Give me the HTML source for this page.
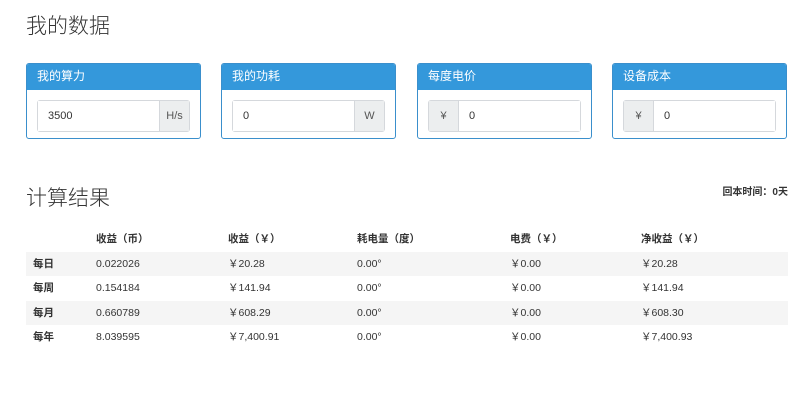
<!DOCTYPE html>
<html><head><meta charset="utf-8"><style>
body{margin:0;width:800px;height:409px;background:#fff;font-family:"Liberation Sans","Noto Sans CJK SC",sans-serif;color:#333;position:relative;overflow:hidden}
.h{position:absolute;left:26px;font-size:21px;font-weight:300;color:#333}
.p{position:absolute;top:63px;width:175px;height:76px;border:1px solid #3a8fcc;border-radius:3px;box-sizing:border-box;overflow:hidden}
.p .t{background:#3498db;color:#fff;font-size:12px;height:26px;line-height:25px;padding-left:10px}
.ig{position:absolute;top:36px;left:10px;right:10px;height:30px;border:1px solid #d5d8dc;border-radius:3px;display:flex;font-size:11px}
.ig .a{background:#eceeef;width:29px;display:flex;align-items:center;justify-content:center;color:#555}
.ig .v{flex:1;background:#fff;padding-left:10px;display:flex;align-items:center}
.ig .a.l{border-right:1px solid #d5d8dc}.ig .a.r{border-left:1px solid #d5d8dc}
table{position:absolute;left:26px;top:227px;width:762px;border-collapse:collapse;font-size:10.5px;table-layout:fixed}
td,th{padding:0;height:24.5px;text-align:left;vertical-align:middle;line-height:14px}
td span{display:inline-block;height:14px;line-height:14px}
td:first-child{padding-left:7px}
th{font-weight:bold;color:#333}
td:first-child{font-weight:bold}
tr.s td{background:#f5f5f5}
</style></head><body>
<div class="h" style="top:10px">我的数据</div>
<div class="p" style="left:26px"><div class="t">我的算力</div><div class="ig"><div class="v">3500</div><div class="a r">H/s</div></div></div>
<div class="p" style="left:221px"><div class="t">我的功耗</div><div class="ig"><div class="v">0</div><div class="a r">W</div></div></div>
<div class="p" style="left:417px"><div class="t">每度电价</div><div class="ig"><div class="a l">¥</div><div class="v">0</div></div></div>
<div class="p" style="left:612px"><div class="t">设备成本</div><div class="ig"><div class="a l">¥</div><div class="v">0</div></div></div>
<div class="h" style="top:182px">计算结果</div>
<div style="position:absolute;right:12px;top:183px;font-size:10px;font-weight:bold">回本时间：0天</div>
<table>
<colgroup><col style="width:70px"><col style="width:132px"><col style="width:129px"><col style="width:153px"><col style="width:131px"><col></colgroup>
<tr><th></th><th>收益（币）</th><th>收益（￥）</th><th>耗电量（度）</th><th>电费（￥）</th><th>净收益（￥）</th></tr>
<tr class="s"><td>每日</td><td><span>0.022026</span></td><td>￥20.28</td><td><span>0.00°</span></td><td>￥0.00</td><td>￥20.28</td></tr>
<tr><td>每周</td><td><span>0.154184</span></td><td>￥141.94</td><td><span>0.00°</span></td><td>￥0.00</td><td>￥141.94</td></tr>
<tr class="s"><td>每月</td><td><span>0.660789</span></td><td>￥608.29</td><td><span>0.00°</span></td><td>￥0.00</td><td>￥608.30</td></tr>
<tr><td>每年</td><td><span>8.039595</span></td><td>￥7,400.91</td><td><span>0.00°</span></td><td>￥0.00</td><td>￥7,400.93</td></tr>
</table>
</body></html>
